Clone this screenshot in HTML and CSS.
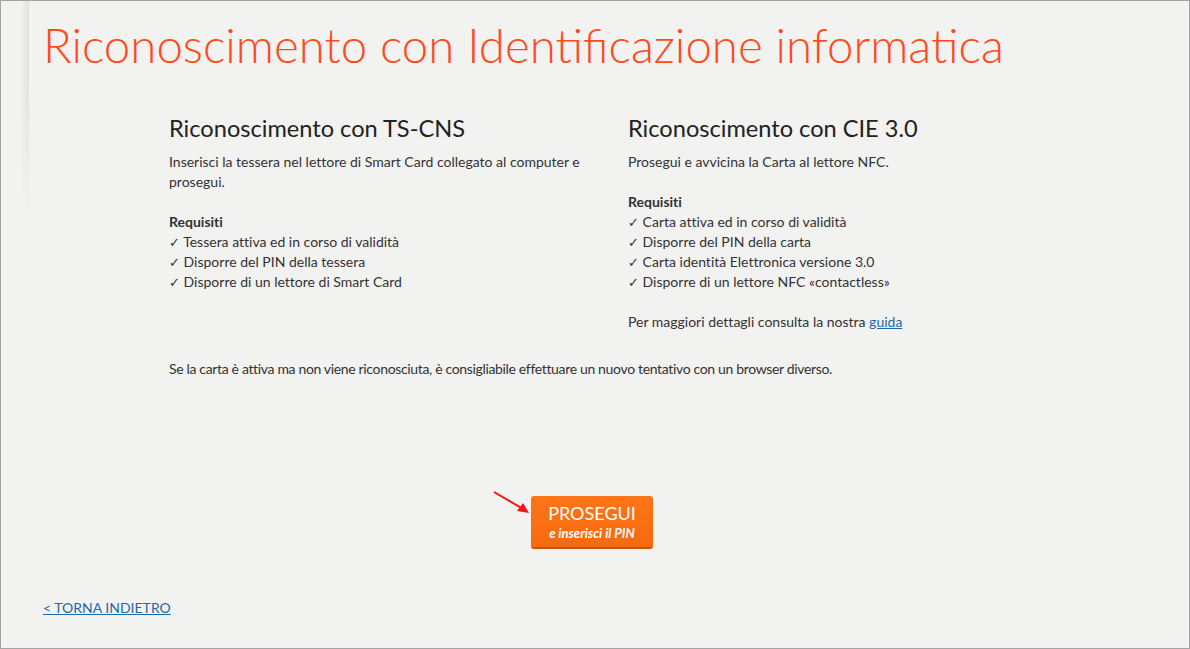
FILE: index.html
```html
<!DOCTYPE html>
<html lang="it">
<head>
    <meta charset="UTF-8">
    <meta name="viewport" content="width=device-width, initial-scale=1.0">
    <title>Riconoscimento con Identificazione informatica</title>
    <link rel="stylesheet" href="styles.css">
</head>
<body>
<div class="page">
    <h1 class="title">Riconoscimento con Identificazione informatica</h1>

    <div class="content">
        <div class="columns">
            <div class="col">
                <h2>Riconoscimento con TS-CNS</h2>
                <p>Inserisci la tessera nel lettore di Smart Card collegato al computer e prosegui.</p>
                <p>
                    <strong>Requisiti</strong><br>
                    <span class="ok">&#10003;</span> Tessera attiva ed in corso di validità<br>
                    <span class="ok">&#10003;</span> Disporre del PIN della tessera<br>
                    <span class="ok">&#10003;</span> Disporre di un lettore di Smart Card
                </p>
            </div>
            <div class="col">
                <h2>Riconoscimento con CIE 3.0</h2>
                <p>Prosegui e avvicina la Carta al lettore NFC.</p>
                <p>
                    <strong>Requisiti</strong><br>
                    <span class="ok">&#10003;</span> Carta attiva ed in corso di validità<br>
                    <span class="ok">&#10003;</span> Disporre del PIN della carta<br>
                    <span class="ok">&#10003;</span> Carta identità Elettronica versione 3.0<br>
                    <span class="ok">&#10003;</span> Disporre di un lettore NFC «contactless»
                </p>
                <p>Per maggiori dettagli consulta la nostra <a href="#">guida</a></p>
            </div>
        </div>

        <p class="note">Se la carta è attiva ma non viene riconosciuta, è consigliabile effettuare un nuovo tentativo con un browser diverso.</p>

        <div class="actions">
            <div class="btn-wrap">
                <!-- freccia rossa -->
                <svg class="arrow" width="40" height="26" viewBox="0 0 40 26">
                    <line x1="2" y1="2" x2="33" y2="20" stroke="#ff1010" stroke-width="2"/>
                    <polygon points="37,23 25,21 31,13" fill="#ff1010"/>
                </svg>
                <a href="#" class="btn-next">
                    <span class="btn-main">PROSEGUI</span>
                    <span class="btn-sub">e inserisci il PIN</span>
                </a>
            </div>
        </div>
    </div>

    <a href="#" class="back">&lt; TORNA INDIETRO</a>
</div>
</body>
</html>
```

FILE: styles.css
```css
/* Pagina */
html, body {
    height: 100%;
}

body {
    margin: 0;
    font-family: Lato, 'Open Sans', sans-serif;
    color: #333;
    background-color: #f2f2f0;
    overflow: hidden;
}

.page {
    position: relative;
    box-sizing: border-box;
    height: 100%;
    border: 1px solid #a4a4a4;
    padding: 0 0 0 42px;
    display: flex;
    flex-direction: column;
}

/* ombra verticale in alto a sinistra */
.page::before {
    content: "";
    position: absolute;
    left: 19px;
    top: 0;
    width: 9px;
    height: 220px;
    background: linear-gradient(to right, rgba(0, 0, 0, 0), rgba(0, 0, 0, 0.07));
    -webkit-mask-image: linear-gradient(to bottom, #000 35%, transparent);
    mask-image: linear-gradient(to bottom, #000 35%, transparent);
}

/* Titolo */
.title {
    margin: 20px 0 0 0;
    font-size: 47.4px;
    line-height: 48px;
    font-weight: 300;
    color: #ff4a1c;
}

/* Contenuto centrale */
.content {
    margin: 46px 0 0 126px;
    width: 846px;
    font-size: 14px;
    line-height: 20px;
    font-variant-ligatures: none;
}

.columns {
    display: grid;
    grid-template-columns: 459px 1fr;
}

.col {
    padding-right: 30px;
}

h2 {
    margin: 0 0 11px 0;
    font-size: 23.6px;
    line-height: 26px;
    font-weight: 400;
    color: #222;
}

p {
    margin: 0 0 20px 0;
}

strong {
    font-weight: 700;
}

.ok {
    font-size: 13px;
    line-height: 0;
}

a {
    color: #1b6aaa;
}

.note {
    margin-top: 7px;
    letter-spacing: -0.34px;
}

/* Bottone prosegui */
.actions {
    display: flex;
    justify-content: center;
    margin-top: 117px;
}

.btn-wrap {
    position: relative;
}

.arrow {
    position: absolute;
    left: -39px;
    top: -6px;
}

.btn-next {
    display: flex;
    flex-direction: column;
    align-items: center;
    width: 122px;
    box-sizing: border-box;
    padding: 7px 0 5px;
    background: linear-gradient(#fd7516, #f56a0e);
    border-bottom: 2px solid #c4560f;
    border-radius: 3px;
    color: #fff;
    text-decoration: none;
}

.btn-main {
    font-size: 18px;
    line-height: 21px;
}

.btn-sub {
    font-size: 13px;
    line-height: 18px;
    font-style: italic;
    font-weight: 700;
}

/* Link indietro */
.back {
    position: absolute;
    left: 42px;
    top: 597px;
    font-size: 14px;
    line-height: 20px;
}
```
